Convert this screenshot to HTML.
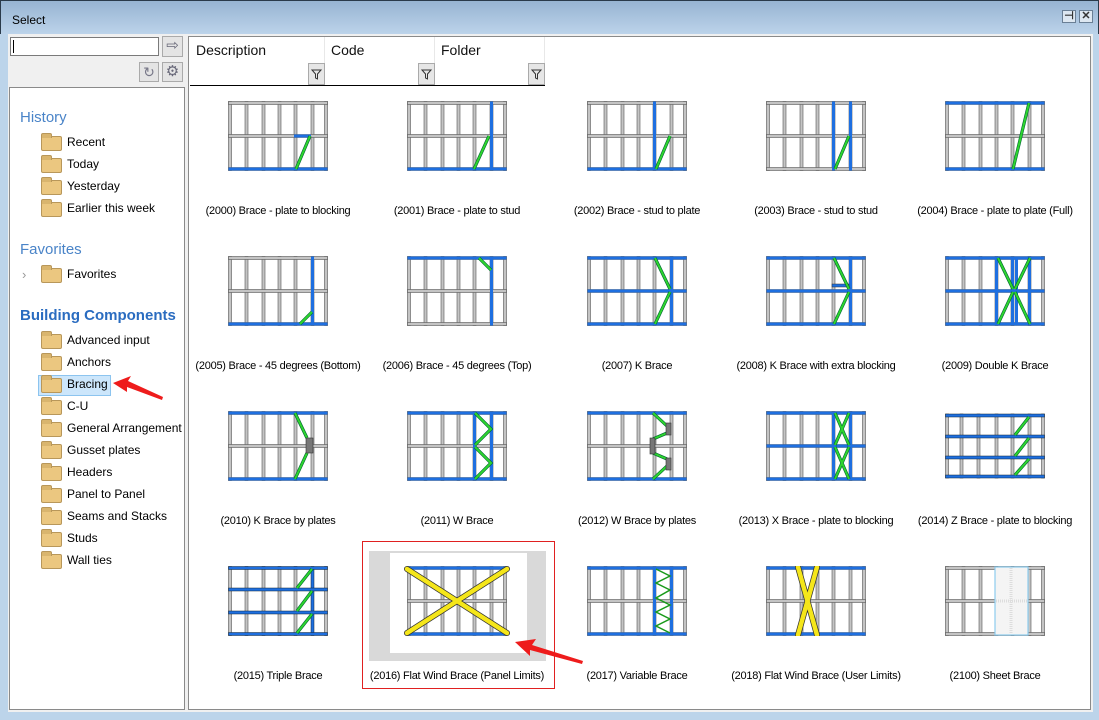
<!DOCTYPE html>
<html><head><meta charset="utf-8">
<style>
*{box-sizing:border-box;margin:0;padding:0}
body{width:1099px;height:720px;overflow:hidden;font-family:"Liberation Sans",sans-serif;font-size:12px;color:#000;position:relative;background:#bcd4ea}
.abs{position:absolute}
#title{left:0;top:0;width:1099px;height:34px;background:linear-gradient(#97b4d2,#bcd3ea);border:1px solid #2a3a4a;border-bottom:none}
#title span{position:absolute;left:11px;top:12px;font-size:12px}
.tb{position:absolute;top:9px;width:14px;height:13px;border:1px solid #6a7f95;background:#dde7f1;font-size:11px;line-height:11px;text-align:center;color:#333;font-weight:bold}
#inner{left:8px;top:34px;width:1085px;height:678px;background:#f0f0f0}
#left{left:9px;top:87px;width:176px;height:623px;background:#fff;border:1px solid #8a8a8a}
#right{left:188px;top:36px;width:903px;height:674px;background:#fff;border:1px solid #8a8a8a}
.hdr{position:absolute;top:37px;height:49px;border-bottom:1px solid #000;font-size:14px;color:#111}
.hdr span{position:absolute;left:6px;top:5px}
.hdr .sep{position:absolute;right:0;top:0;width:1px;height:48px;background:#e8e8e8}
.fb{position:absolute;right:0;bottom:0;width:17px;height:22px;background:#e6e6e6;border:1px solid #aaa}
.sec{position:absolute;left:20px;font-size:15px;color:#4a84c8}
.it{position:absolute;left:41px;height:18px;font-size:12px;white-space:nowrap}
.it i{position:absolute;left:0;top:3px;width:21px;height:15px;background:#ebc780;border:1px solid #b8975a;border-radius:2px}
.it i:before{content:"";position:absolute;left:-1px;top:-4px;width:9px;height:4px;background:#d9b56e;border:1px solid #b8975a;border-bottom:none;border-radius:2px 2px 0 0}
.it b{position:absolute;left:26px;top:2px;font-weight:normal}
.cell{position:absolute;width:180px;text-align:center}
.cell svg{display:block;margin:0 auto}
.cell .l{position:absolute;left:-10px;width:200px;text-align:center;white-space:nowrap;font-size:11px;letter-spacing:-0.25px;margin-top:1px}
</style></head><body>
<svg width="0" height="0" style="position:absolute">
<defs>
<g id="w">
<rect x="0" y="0" width="100" height="70" fill="#fff"/>
<g fill="#c4c4c4" stroke="#555" stroke-width="0.6">
<rect x="0.5" y="0.5" width="3" height="69"/><rect x="17" y="0.5" width="3" height="69"/><rect x="34" y="0.5" width="3" height="69"/><rect x="50" y="0.5" width="3" height="69"/><rect x="66" y="0.5" width="3" height="69"/><rect x="83" y="0.5" width="3" height="69"/><rect x="96.5" y="0.5" width="3" height="69"/>
<rect x="0.5" y="0.5" width="99" height="3"/><rect x="0.5" y="33.5" width="99" height="3"/><rect x="0.5" y="66.5" width="99" height="3"/>
</g></g>
</defs></svg>

<div id="title" class="abs"><span>Select</span>
<div class="tb" style="left:1061px">⊣</div><div class="tb" style="left:1078px">✕</div></div>
<div id="inner" class="abs"></div>

<div class="abs" style="left:10px;top:37px;width:149px;height:19px;background:#fff;border:1px solid #7a7a7a"><div style="position:absolute;left:2px;top:2px;width:1px;height:13px;background:#000"></div></div>
<div class="abs" style="left:162px;top:36px;width:21px;height:21px;background:#e4e4e4;border:1px solid #aaa;color:#667;font-size:15px;line-height:18px;text-align:center">⇨</div>
<div class="abs" style="left:139px;top:62px;width:20px;height:20px;background:#e4e4e4;border:1px solid #aaa;color:#778;font-size:14px;line-height:18px;text-align:center">↻</div>
<div class="abs" style="left:162px;top:62px;width:21px;height:20px;background:#e4e4e4;border:1px solid #aaa;color:#667;font-size:15px;line-height:18px;text-align:center">⚙</div>

<div id="left" class="abs"></div>
<div class="sec" style="top:109px">History</div>
<div class="it" style="top:133px"><i></i><b>Recent</b></div>
<div class="it" style="top:155px"><i></i><b>Today</b></div>
<div class="it" style="top:177px"><i></i><b>Yesterday</b></div>
<div class="it" style="top:199px"><i></i><b>Earlier this week</b></div>
<div class="sec" style="top:241px">Favorites</div>
<div class="abs" style="left:22px;top:267px;color:#999;font-size:13px">›</div>
<div class="it" style="top:265px"><i></i><b>Favorites</b></div>
<div class="sec" style="top:307px;font-weight:bold;color:#2a6cc0;font-size:15px">Building Components</div>
<div class="abs" style="left:38px;top:375px;width:73px;height:21px;background:#cce6fb;border:1px solid #8cc4ef"></div>
<div class="it" style="top:331px"><i></i><b>Advanced input</b></div>
<div class="it" style="top:353px"><i></i><b>Anchors</b></div>
<div class="it" style="top:375px"><i></i><b>Bracing</b></div>
<div class="it" style="top:397px"><i></i><b>C-U</b></div>
<div class="it" style="top:419px"><i></i><b>General Arrangement</b></div>
<div class="it" style="top:441px"><i></i><b>Gusset plates</b></div>
<div class="it" style="top:463px"><i></i><b>Headers</b></div>
<div class="it" style="top:485px"><i></i><b>Panel to Panel</b></div>
<div class="it" style="top:507px"><i></i><b>Seams and Stacks</b></div>
<div class="it" style="top:529px"><i></i><b>Studs</b></div>
<div class="it" style="top:551px"><i></i><b>Wall ties</b></div>

<div id="right" class="abs"></div>
<div class="hdr" style="left:190px;width:135px"><span>Description</span><div class="sep"></div><div class="fb"><svg width="15" height="20"><path d="M3 6h9l-3.5 4v5l-2-1v-4z" fill="none" stroke="#333"/></svg></div></div>
<div class="hdr" style="left:325px;width:110px"><span>Code</span><div class="sep"></div><div class="fb"><svg width="15" height="20"><path d="M3 6h9l-3.5 4v5l-2-1v-4z" fill="none" stroke="#333"/></svg></div></div>
<div class="hdr" style="left:435px;width:110px"><span>Folder</span><div class="sep"></div><div class="fb"><svg width="15" height="20"><path d="M3 6h9l-3.5 4v5l-2-1v-4z" fill="none" stroke="#333"/></svg></div></div>

<div class="abs" style="left:362px;top:541px;width:193px;height:148px;border:1px solid #e02020"></div>
<div class="abs" style="left:369px;top:551px;width:177px;height:110px;background:#d9d9d9"></div>
<div class="abs" style="left:390px;top:553px;width:137px;height:100px;background:#fff"></div>

<!-- ROW 1 -->
<div class="cell" style="left:188px;top:101px"><svg width="100" height="70"><use href="#w"/><rect x="0.5" y="66.5" width="99" height="3" fill="#1e6fe0"/><rect x="66" y="33.5" width="17" height="3" fill="#1e6fe0"/><line x1="68" y1="68" x2="82" y2="35" stroke="#063" stroke-width="3.2"/><line x1="68" y1="68" x2="82" y2="35" stroke="#2ed52e" stroke-width="2"/></svg><div class="l" style="top:103px">(2000) Brace - plate to blocking</div></div>
<div class="cell" style="left:367px;top:101px"><svg width="100" height="70"><use href="#w"/><rect x="0.5" y="66.5" width="99" height="3" fill="#1e6fe0"/><rect x="83" y="0.5" width="3" height="69" fill="#1e6fe0"/><line x1="67" y1="68" x2="82" y2="35" stroke="#063" stroke-width="3.2"/><line x1="67" y1="68" x2="82" y2="35" stroke="#2ed52e" stroke-width="2"/></svg><div class="l" style="top:103px">(2001) Brace - plate to stud</div></div>
<div class="cell" style="left:547px;top:101px"><svg width="100" height="70"><use href="#w"/><rect x="0.5" y="66.5" width="99" height="3" fill="#1e6fe0"/><rect x="66" y="0.5" width="3" height="69" fill="#1e6fe0"/><line x1="69" y1="68" x2="83" y2="35" stroke="#063" stroke-width="3.2"/><line x1="69" y1="68" x2="83" y2="35" stroke="#2ed52e" stroke-width="2"/></svg><div class="l" style="top:103px">(2002) Brace - stud to plate</div></div>
<div class="cell" style="left:726px;top:101px"><svg width="100" height="70"><use href="#w"/><rect x="66" y="0.5" width="3" height="69" fill="#1e6fe0"/><rect x="83" y="0.5" width="3" height="69" fill="#1e6fe0"/><line x1="69" y1="68" x2="83" y2="35" stroke="#063" stroke-width="3.2"/><line x1="69" y1="68" x2="83" y2="35" stroke="#2ed52e" stroke-width="2"/></svg><div class="l" style="top:103px">(2003) Brace - stud to stud</div></div>
<div class="cell" style="left:905px;top:101px"><svg width="100" height="70"><use href="#w"/><rect x="0.5" y="0.5" width="99" height="3" fill="#1e6fe0"/><rect x="0.5" y="66.5" width="99" height="3" fill="#1e6fe0"/><line x1="68" y1="68" x2="84" y2="2" stroke="#063" stroke-width="3.2"/><line x1="68" y1="68" x2="84" y2="2" stroke="#2ed52e" stroke-width="2"/></svg><div class="l" style="top:103px">(2004) Brace - plate to plate (Full)</div></div>

<!-- ROW 2 -->
<div class="cell" style="left:188px;top:256px"><svg width="100" height="70"><use href="#w"/><rect x="0.5" y="66.5" width="99" height="3" fill="#1e6fe0"/><rect x="83" y="0.5" width="3" height="69" fill="#1e6fe0"/><line x1="72" y1="68" x2="84" y2="56" stroke="#063" stroke-width="3.2"/><line x1="72" y1="68" x2="84" y2="56" stroke="#2ed52e" stroke-width="2"/></svg><div class="l" style="top:103px">(2005) Brace - 45 degrees (Bottom)</div></div>
<div class="cell" style="left:367px;top:256px"><svg width="100" height="70"><use href="#w"/><rect x="0.5" y="0.5" width="99" height="3" fill="#1e6fe0"/><rect x="83" y="0.5" width="3" height="69" fill="#1e6fe0"/><line x1="72" y1="2" x2="84" y2="14" stroke="#063" stroke-width="3.2"/><line x1="72" y1="2" x2="84" y2="14" stroke="#2ed52e" stroke-width="2"/></svg><div class="l" style="top:103px">(2006) Brace - 45 degrees (Top)</div></div>
<div class="cell" style="left:547px;top:256px"><svg width="100" height="70"><use href="#w"/><rect x="0.5" y="0.5" width="99" height="3" fill="#1e6fe0"/><rect x="0.5" y="33.5" width="99" height="3" fill="#1e6fe0"/><rect x="0.5" y="66.5" width="99" height="3" fill="#1e6fe0"/><rect x="83" y="0.5" width="3" height="69" fill="#1e6fe0"/><path d="M68 2L83 33M83 36L68 68" stroke="#063" stroke-width="3.2"/><path d="M68 2L83 33M83 36L68 68" stroke="#2ed52e" stroke-width="2"/></svg><div class="l" style="top:103px">(2007) K Brace</div></div>
<div class="cell" style="left:726px;top:256px"><svg width="100" height="70"><use href="#w"/><rect x="0.5" y="0.5" width="99" height="3" fill="#1e6fe0"/><rect x="0.5" y="33.5" width="99" height="3" fill="#1e6fe0"/><rect x="0.5" y="66.5" width="99" height="3" fill="#1e6fe0"/><rect x="83" y="0.5" width="3" height="69" fill="#1e6fe0"/><rect x="66" y="28" width="17" height="3" fill="#1e6fe0" stroke="#333" stroke-width=".5"/><path d="M68 2L83 33M83 36L68 68" stroke="#063" stroke-width="3.2"/><path d="M68 2L83 33M83 36L68 68" stroke="#2ed52e" stroke-width="2"/></svg><div class="l" style="top:103px">(2008) K Brace with extra blocking</div></div>
<div class="cell" style="left:905px;top:256px"><svg width="100" height="70"><use href="#w"/><rect x="0.5" y="0.5" width="99" height="3" fill="#1e6fe0"/><rect x="0.5" y="33.5" width="99" height="3" fill="#1e6fe0"/><rect x="0.5" y="66.5" width="99" height="3" fill="#1e6fe0"/><rect x="50" y="0.5" width="3" height="69" fill="#1e6fe0"/><rect x="66" y="0.5" width="3" height="69" fill="#1e6fe0"/><rect x="70" y="0.5" width="3" height="69" fill="#1e6fe0"/><rect x="83" y="0.5" width="3" height="69" fill="#1e6fe0"/><path d="M53 2L68 33M68 36L53 68M85 2L70 33M70 36L85 68" stroke="#063" stroke-width="3.2"/><path d="M53 2L68 33M68 36L53 68M85 2L70 33M70 36L85 68" stroke="#2ed52e" stroke-width="2"/></svg><div class="l" style="top:103px">(2009) Double K Brace</div></div>

<!-- ROW 3 -->
<div class="cell" style="left:188px;top:411px"><svg width="100" height="70"><use href="#w"/><rect x="0.5" y="0.5" width="99" height="3" fill="#1e6fe0"/><rect x="0.5" y="66.5" width="99" height="3" fill="#1e6fe0"/><path d="M67 2L79 27M79 42L67 68" stroke="#063" stroke-width="3.2"/><path d="M67 2L79 27M79 42L67 68" stroke="#2ed52e" stroke-width="2"/><rect x="78" y="27" width="7" height="15" fill="#777" stroke="#333" stroke-width=".6"/></svg><div class="l" style="top:103px">(2010) K Brace by plates</div></div>
<div class="cell" style="left:367px;top:411px"><svg width="100" height="70"><use href="#w"/><rect x="0.5" y="0.5" width="99" height="3" fill="#1e6fe0"/><rect x="0.5" y="66.5" width="99" height="3" fill="#1e6fe0"/><rect x="66" y="0.5" width="3" height="69" fill="#1e6fe0"/><rect x="83" y="0.5" width="3" height="69" fill="#1e6fe0"/><path d="M68 2L84 18L68 34M68 36L84 52L68 68" fill="none" stroke="#063" stroke-width="3.2"/><path d="M68 2L84 18L68 34M68 36L84 52L68 68" fill="none" stroke="#2ed52e" stroke-width="2"/></svg><div class="l" style="top:103px">(2011) W Brace</div></div>
<div class="cell" style="left:547px;top:411px"><svg width="100" height="70"><use href="#w"/><rect x="0.5" y="0.5" width="99" height="3" fill="#1e6fe0"/><rect x="0.5" y="66.5" width="99" height="3" fill="#1e6fe0"/><path d="M66 2L80 15M80 22L66 28M66 42L80 48M80 55L66 68" fill="none" stroke="#063" stroke-width="3.2"/><path d="M66 2L80 15M80 22L66 28M66 42L80 48M80 55L66 68" fill="none" stroke="#2ed52e" stroke-width="2"/><rect x="79" y="12" width="5" height="12" fill="#777" stroke="#333" stroke-width=".6"/><rect x="79" y="47" width="5" height="12" fill="#777" stroke="#333" stroke-width=".6"/><rect x="63" y="27" width="5" height="16" fill="#777" stroke="#333" stroke-width=".6"/></svg><div class="l" style="top:103px">(2012) W Brace by plates</div></div>
<div class="cell" style="left:726px;top:411px"><svg width="100" height="70"><use href="#w"/><rect x="0.5" y="0.5" width="99" height="3" fill="#1e6fe0"/><rect x="0.5" y="33.5" width="99" height="3" fill="#1e6fe0"/><rect x="0.5" y="66.5" width="99" height="3" fill="#1e6fe0"/><rect x="66" y="0.5" width="3" height="69" fill="#1e6fe0"/><rect x="83" y="0.5" width="3" height="69" fill="#1e6fe0"/><path d="M69 2L83 34M83 2L69 34M69 36L83 68M83 36L69 68" stroke="#063" stroke-width="3.2"/><path d="M69 2L83 34M83 2L69 34M69 36L83 68M83 36L69 68" stroke="#2ed52e" stroke-width="2"/></svg><div class="l" style="top:103px">(2013) X Brace - plate to blocking</div></div>
<div class="cell" style="left:905px;top:411px"><svg width="100" height="70"><rect width="100" height="70" fill="#fff"/><g fill="#c4c4c4" stroke="#555" stroke-width="0.6"><rect x="0.5" y="3" width="3" height="64"/><rect x="15" y="3" width="3" height="64"/><rect x="32" y="3" width="3" height="64"/><rect x="50" y="3" width="3" height="64"/><rect x="66" y="3" width="3" height="64"/><rect x="83" y="3" width="3" height="64"/><rect x="96.5" y="3" width="3" height="64"/></g><g fill="#1e6fe0" stroke="#123" stroke-width=".5"><rect x="0.5" y="3" width="99" height="3"/><rect x="0.5" y="24" width="99" height="3"/><rect x="0.5" y="45" width="99" height="3"/><rect x="0.5" y="64" width="99" height="3"/></g><path d="M70 24L84 6M70 45L84 27M70 64L84 48" stroke="#063" stroke-width="3.2"/><path d="M70 24L84 6M70 45L84 27M70 64L84 48" stroke="#2ed52e" stroke-width="2"/></svg><div class="l" style="top:103px">(2014) Z Brace - plate to blocking</div></div>

<!-- ROW 4 -->
<div class="cell" style="left:188px;top:566px"><svg width="100" height="70"><rect width="100" height="70" fill="#fff"/><g fill="#c4c4c4" stroke="#555" stroke-width="0.6"><rect x="0.5" y="0.5" width="3" height="69"/><rect x="17" y="0.5" width="3" height="69"/><rect x="34" y="0.5" width="3" height="69"/><rect x="50" y="0.5" width="3" height="69"/><rect x="66" y="0.5" width="3" height="69"/><rect x="96.5" y="0.5" width="3" height="69"/></g><g fill="#1e6fe0" stroke="#123" stroke-width=".5"><rect x="83" y="0.5" width="3" height="69"/><rect x="0.5" y="0.5" width="99" height="3"/><rect x="0.5" y="22" width="99" height="3"/><rect x="0.5" y="45" width="99" height="3"/><rect x="0.5" y="66.5" width="99" height="3"/></g><path d="M69 22L84 3M69 45L84 25M69 67L84 48" stroke="#063" stroke-width="3.2"/><path d="M69 22L84 3M69 45L84 25M69 67L84 48" stroke="#2ed52e" stroke-width="2"/></svg><div class="l" style="top:103px">(2015) Triple Brace</div></div>
<div class="cell" style="left:367px;top:566px"><svg width="106" height="70"><g transform="translate(3,0)"><use href="#w"/></g><rect x="3" y="0.5" width="99" height="3" fill="#1e6fe0"/><rect x="3" y="66.5" width="99" height="3" fill="#1e6fe0"/><path d="M3 3L103 67M103 3L3 67" stroke="#333" stroke-width="6" stroke-linecap="round"/><path d="M3 3L103 67M103 3L3 67" stroke="#f5e61a" stroke-width="4.5" stroke-linecap="round"/></svg><div class="l" style="top:103px">(2016) Flat Wind Brace (Panel Limits)</div></div>
<div class="cell" style="left:547px;top:566px"><svg width="100" height="70"><use href="#w"/><rect x="0.5" y="0.5" width="99" height="3" fill="#1e6fe0"/><rect x="0.5" y="66.5" width="99" height="3" fill="#1e6fe0"/><rect x="66" y="0.5" width="3" height="69" fill="#1e6fe0"/><rect x="83" y="0.5" width="3" height="69" fill="#1e6fe0"/><path d="M69 3L83 10L69 17L83 24L69 32L83 39L69 46L83 53L69 60L83 67" fill="none" stroke="#1a9a1a" stroke-width="1.5"/></svg><div class="l" style="top:103px">(2017) Variable Brace</div></div>
<div class="cell" style="left:726px;top:566px"><svg width="100" height="70"><use href="#w"/><rect x="0.5" y="0.5" width="99" height="3" fill="#1e6fe0"/><rect x="0.5" y="66.5" width="99" height="3" fill="#1e6fe0"/><path d="M32 1L51 69M51 1L32 69" stroke="#333" stroke-width="6" stroke-linecap="round"/><path d="M32 1L51 69M51 1L32 69" stroke="#f5e61a" stroke-width="4.5" stroke-linecap="round"/></svg><div class="l" style="top:103px">(2018) Flat Wind Brace (User Limits)</div></div>
<div class="cell" style="left:905px;top:566px"><svg width="100" height="70"><use href="#w"/><rect x="50" y="1" width="33" height="68" fill="#f4f4f4" stroke="#8ccbee" stroke-width="1.2"/><path d="M66 2V68M51 35H82" stroke="#ddd" stroke-width="3" stroke-dasharray="1 1"/></svg><div class="l" style="top:103px">(2100) Sheet Brace</div></div>

<!-- red arrows -->
<svg class="abs" style="left:0;top:0" width="1099" height="720">
<path d="M113 383L131 376L128 381L163 397L162 400L127 387L127 392Z" fill="#ee1c1c"/>
<path d="M515 642L536 639L532 645L583 661L582 664L530 650L530 656Z" fill="#ee1c1c"/>
</svg>
</body></html>
